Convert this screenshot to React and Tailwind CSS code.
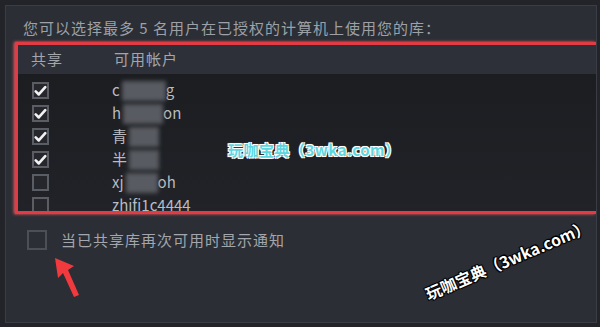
import { Fragment } from 'react'

const font = { fontFamily: '"Noto Sans CJK SC", "Noto Sans", sans-serif' }

const rows = [
  { pre: 'c', blob: 44, post: 'g', on: true },
  { pre: 'h', blob: 40, post: 'on', on: true },
  { pre: '青', blob: 30, post: '', on: true },
  { pre: '半', blob: 30, post: '', on: true },
  { pre: 'xj', blob: 32, post: 'oh', on: false },
  { pre: 'zhifi1c4444', blob: 0, post: '', on: false },
]

function Check({ on }) {
  return (
    <div className="w-[17px] h-[17px] border-2 border-[#5a5d64] bg-[#25272c] flex items-center justify-center">
      {on && (
        <svg width="15" height="14" viewBox="0 0 15 14">
          <path d="M2 7.5 L5.5 11 L13 2.5" fill="none" stroke="#f2f2f2" strokeWidth="3" strokeLinecap="round" strokeLinejoin="round" />
        </svg>
      )}
    </div>
  )
}

export default function App() {
  return (
    <div className="w-[600px] h-[327px] bg-[#222429] pt-[5px] pl-[5px] pr-[3px] pb-[4px]" style={font}>
      <div className="relative h-full bg-[#2b2e35] border border-[#3a3d44] flex flex-col overflow-hidden">
        <div className="mt-[13px] ml-[17px] text-[15px] leading-[18px] tracking-[1px] text-[#9da1a7]">
          您可以选择最多 5 名用户在已授权的计算机上使用您的库：
        </div>
        <div className="mt-[4px] h-px bg-[#2e3a30] ml-[10px]" />
        <div className="ml-[9px] h-[172px] border-[3px] border-r-0 border-[#e23b43] shadow-[-1px_0_3px_#ff5a62] flex flex-col overflow-hidden">
          <div className="h-[29px] shrink-0 bg-[#2d3038] flex items-center text-[15px] tracking-[1px] text-[#a3a6ac]">
            <span className="ml-[13px] w-[83px]">共享</span>
            <span>可用帐户</span>
          </div>
          <div className="relative flex-1 bg-gradient-to-b from-[#1b1d21] to-[#212328] pt-[5px]">
            {rows.map((r, i) => (
              <div key={i} className="h-[23px] flex items-center">
                <div className="ml-[14px] w-[80px]">
                  <Check on={r.on} />
                </div>
                <div className="flex items-center text-[15px] text-[#b9bcc1]">
                  <span>{r.pre}</span>
                  {r.blob > 0 && (
                    <Fragment>
                      <span className="inline-block h-[20px] bg-[#585b61] blur-[2px] ml-[2px]" style={{ width: r.blob }} />
                      <span>{r.post}</span>
                    </Fragment>
                  )}
                </div>
              </div>
            ))}
            <div className="absolute left-[210px] top-[65px] text-[15px] font-bold text-[#5fd6df] tracking-[0.5px] [text-shadow:0_0_2px_#fff,1px_1px_0_#fff,-1px_-1px_0_#fff,1px_-1px_0_#fff,-1px_1px_0_#fff]">
              玩咖宝典（3wka.com）
            </div>
          </div>
        </div>
        <div className="mt-[15px] ml-[21px] flex items-center">
          <div className="w-[20px] h-[20px] border-2 border-[#4c4f56] bg-[#2b2e35]" />
          <span className="ml-[14px] text-[15px] tracking-[1px] text-[#a3a6ac]">当已共享库再次可用时显示通知</span>
        </div>
        <svg className="absolute left-[44px] top-[249px]" width="40" height="48" viewBox="0 0 40 48">
          <path d="M5 3 L24 11 L18 15 L29 40 L24 42 L13 18 L8 23 Z" fill="#f03a3e" />
        </svg>
        <div className="absolute left-[420px] top-[276px] origin-left -rotate-[23deg] text-[16px] font-bold text-white whitespace-nowrap [text-shadow:0_0_2px_#000,1px_1px_0_#000,-1px_-1px_0_#000,1px_-1px_0_#000,-1px_1px_0_#000]">
          玩咖宝典（3wka.com）
        </div>
      </div>
    </div>
  )
}
